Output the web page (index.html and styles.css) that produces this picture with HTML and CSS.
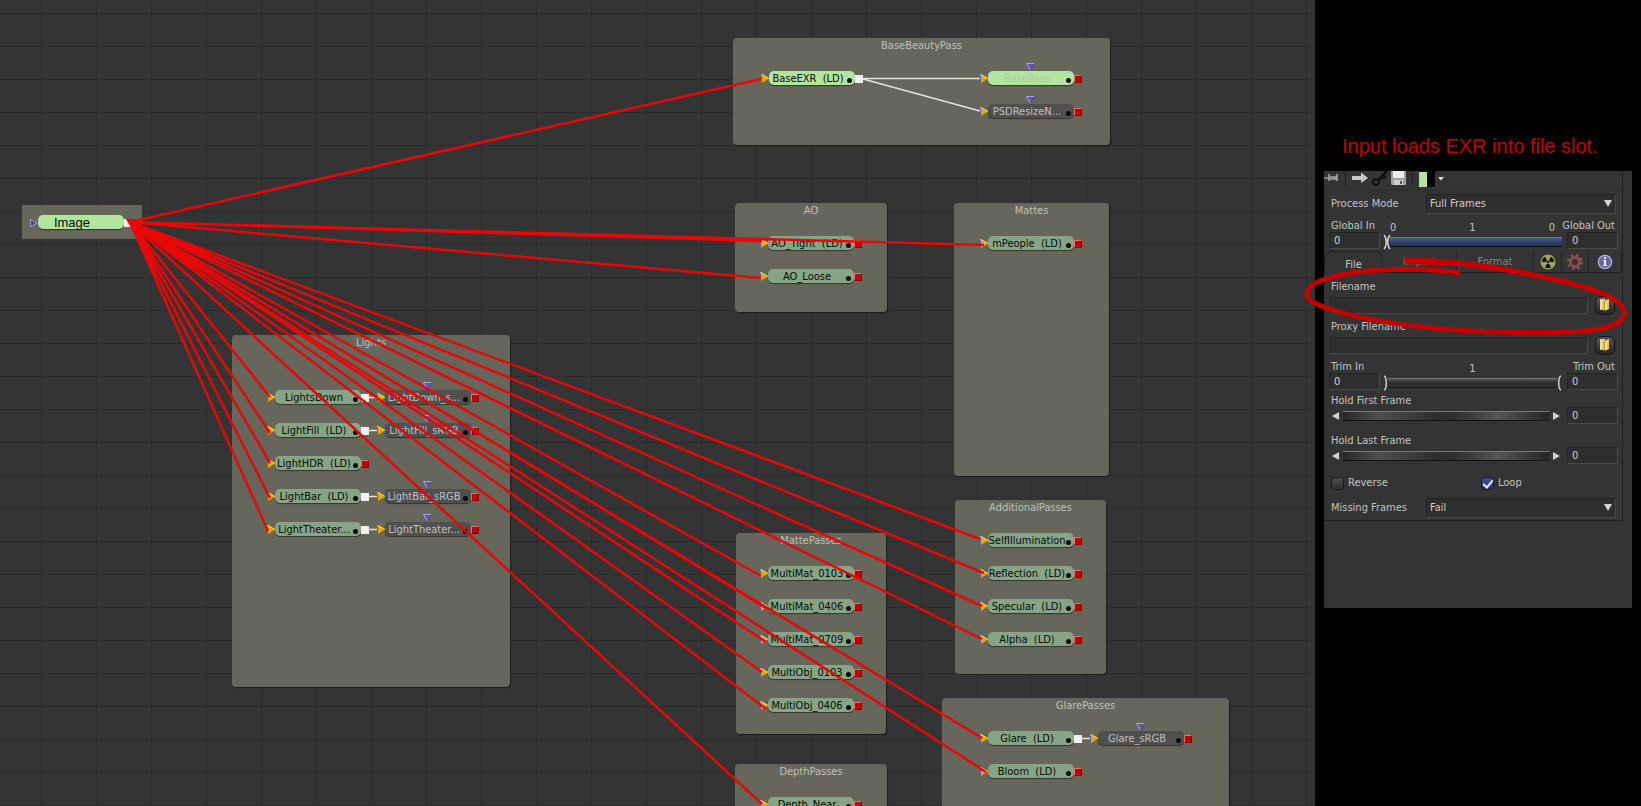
FILE: index.html
```html
<!DOCTYPE html>
<html lang="en">
<head>
<meta charset="utf-8">
<title>Node flow</title>
<link rel="stylesheet" href="styles.css">
</head>
<body>
<svg class="defs" aria-hidden="true">
  <symbol id="in" viewBox="0 0 8 9"><path d="M0 0v9l3-2V2z" fill="#5a5ab4"/><path d="M0 .5l2 1.500" stroke="#c8c8ff"/><path d="M1 0v9L8 4.500z" fill="#e8a800"/><path d="M1 .5L8 4.500" stroke="#ffdc50" fill="none"/></symbol>
  <symbol id="mask" viewBox="0 0 9 8"><path d="M.5.500h8l-4 7z" fill="#5c5cae" stroke="#a5a5e6"/><path d="M8.500.500l-4 7" stroke="#303078"/></symbol>
  <symbol id="folder" viewBox="0 0 12 14"><path d="M1 1h5v11H1z" fill="#e8cc60"/><path d="M5 3l5-2v10l-5 2z" fill="#f4e090"/><path d="M2 2v9" stroke="#fff4b8"/><path d="M5.500 3v10" stroke="#a88a28"/><path d="M9 2v9" stroke="#c9a83e"/></symbol>
</svg>
<main class="app">
  <section class="canvas" aria-label="Flow">
    <div class="group g-image">
      <div class="node lit image"><svg class="src" viewBox="0 0 8 8"><path d="M.5.500v7l6.500-3.500z" fill="#3c3c9a" stroke="#9a9ae0"/></svg><span>Image</span><i class="out open"></i></div>
    </div>

    <div class="group g-base"><h2>BaseBeautyPass</h2>
      <div class="row">
        <div class="node lit"><svg class="in"><use href="#in"/></svg><span>BaseEXR&nbsp; (LD)</span><i class="dot"></i><i class="out open"></i></div>
        <div class="node lit ghost"><svg class="mask"><use href="#mask"/></svg><svg class="in"><use href="#in"/></svg><span>BasePass</span><i class="dot"></i><i class="out"></i></div>
      </div>
      <div class="row end">
        <div class="node tool"><svg class="mask"><use href="#mask"/></svg><svg class="in"><use href="#in"/></svg><span>PSDResizeN...</span><i class="dot"></i><i class="out"></i></div>
      </div>
    </div>

    <div class="group g-ao"><h2>AO</h2>
      <div class="row"><div class="node"><svg class="in"><use href="#in"/></svg><span>AO_Tight&nbsp; (LD)</span><i class="dot"></i><i class="out"></i></div></div>
      <div class="row"><div class="node"><svg class="in"><use href="#in"/></svg><span>AO_Loose</span><i class="dot"></i><i class="out"></i></div></div>
    </div>

    <div class="group g-mattes"><h2>Mattes</h2>
      <div class="row"><div class="node"><svg class="in"><use href="#in"/></svg><span>mPeople&nbsp; (LD)</span><i class="dot"></i><i class="out"></i></div></div>
    </div>

    <div class="group g-lights"><h2>Lights</h2>
      <div class="row">
        <div class="node"><svg class="in"><use href="#in"/></svg><span>LightsDown</span><i class="dot"></i><i class="out open"></i></div>
        <div class="node tool"><svg class="mask"><use href="#mask"/></svg><svg class="in"><use href="#in"/></svg><span>LightDown_s...</span><i class="dot"></i><i class="out"></i></div>
      </div>
      <div class="row">
        <div class="node"><svg class="in"><use href="#in"/></svg><span>LightFill&nbsp; (LD)</span><i class="dot"></i><i class="out open"></i></div>
        <div class="node tool"><svg class="mask"><use href="#mask"/></svg><svg class="in"><use href="#in"/></svg><span>LightFill_sRGB</span><i class="dot"></i><i class="out"></i></div>
      </div>
      <div class="row"><div class="node"><svg class="in"><use href="#in"/></svg><span>LightHDR&nbsp; (LD)</span><i class="dot"></i><i class="out"></i></div></div>
      <div class="row">
        <div class="node"><svg class="in"><use href="#in"/></svg><span>LightBar&nbsp; (LD)</span><i class="dot"></i><i class="out open"></i></div>
        <div class="node tool"><svg class="mask"><use href="#mask"/></svg><svg class="in"><use href="#in"/></svg><span>LightBar_sRGB</span><i class="dot"></i><i class="out"></i></div>
      </div>
      <div class="row">
        <div class="node"><svg class="in"><use href="#in"/></svg><span>LightTheater...</span><i class="dot"></i><i class="out open"></i></div>
        <div class="node tool"><svg class="mask"><use href="#mask"/></svg><svg class="in"><use href="#in"/></svg><span>LightTheater...</span><i class="dot"></i><i class="out"></i></div>
      </div>
    </div>

    <div class="group g-multi"><h2>MattePasses</h2>
      <div class="row"><div class="node"><svg class="in"><use href="#in"/></svg><span>MultiMat_0103</span><i class="dot"></i><i class="out"></i></div></div>
      <div class="row"><div class="node"><svg class="in"><use href="#in"/></svg><span>MultiMat_0406</span><i class="dot"></i><i class="out"></i></div></div>
      <div class="row"><div class="node"><svg class="in"><use href="#in"/></svg><span>MultiMat_0709</span><i class="dot"></i><i class="out"></i></div></div>
      <div class="row"><div class="node"><svg class="in"><use href="#in"/></svg><span>MultiObj_0103</span><i class="dot"></i><i class="out"></i></div></div>
      <div class="row"><div class="node"><svg class="in"><use href="#in"/></svg><span>MultiObj_0406</span><i class="dot"></i><i class="out"></i></div></div>
    </div>

    <div class="group g-extra"><h2>AdditionalPasses</h2>
      <div class="row"><div class="node"><svg class="in"><use href="#in"/></svg><span>SelfIllumination</span><i class="dot"></i><i class="out"></i></div></div>
      <div class="row"><div class="node"><svg class="in"><use href="#in"/></svg><span>Reflection&nbsp; (LD)</span><i class="dot"></i><i class="out"></i></div></div>
      <div class="row"><div class="node"><svg class="in"><use href="#in"/></svg><span>Specular&nbsp; (LD)</span><i class="dot"></i><i class="out"></i></div></div>
      <div class="row"><div class="node"><svg class="in"><use href="#in"/></svg><span>Alpha&nbsp; (LD)</span><i class="dot"></i><i class="out"></i></div></div>
    </div>

    <div class="group g-glare"><h2>GlarePasses</h2>
      <div class="row">
        <div class="node"><svg class="in"><use href="#in"/></svg><span>Glare&nbsp; (LD)</span><i class="dot"></i><i class="out open"></i></div>
        <div class="node tool"><svg class="mask"><use href="#mask"/></svg><svg class="in"><use href="#in"/></svg><span>Glare_sRGB</span><i class="dot"></i><i class="out"></i></div>
      </div>
      <div class="row"><div class="node"><svg class="in"><use href="#in"/></svg><span>Bloom&nbsp; (LD)</span><i class="dot"></i><i class="out"></i></div></div>
    </div>

    <div class="group g-depth"><h2>DepthPasses</h2>
      <div class="row"><div class="node"><svg class="in"><use href="#in"/></svg><span>Depth_Near</span><i class="dot"></i><i class="out"></i></div></div>
    </div>

    <svg class="wires" aria-hidden="true">
      <path class="link" d="M863 78.500H980M863 79L980 111M369 397.500H377M369 430.500H377M369 496.500H377M369 529.500H377M1082 738.500H1090"/>
      <path class="feed" d="M130 222L761 79M130 222L762 241M130 222L761 278M130 222L984 245M130 222L270 397M130 222L270 433M130 222L270 463M130 222L270 498M130 222L268 531M130 222L980 539M130 222L984 573M130 222L982 606M130 222L982 639M130 222L761 576M130 222L766 608M130 222L766 642M130 222L762 672M130 222L766 709M130 222L982 738M130 222L986 772M130 222L762 804"/>
      <path d="M126 219l12 0 2 8-6 6z" fill="#f00000"/>
    </svg>
  </section>

  <aside class="side">
    <p class="caption">Input loads EXR into file slot.</p>
    <form class="panel">
      <div class="settings">
        <div class="toolbar">
          <button type="button" aria-label="Pin"><svg width="16" height="16"><path d="M0 7h5" stroke="#ccc"/><path d="M5 3v7M6 6h6v2H6M13 3v7" stroke="#aaa" fill="none" stroke-width="1.500"/></svg></button>
          <i class="bar"></i>
          <button type="button" aria-label="Next"><svg width="17" height="16"><path d="M0 5h9V1.500l7 5.500-7 5V9H0z" fill="#c8c8c8"/></svg></button>
          <button type="button" aria-label="Keys"><svg width="16" height="16"><circle cx="4" cy="11" r="3" fill="none" stroke="#080808" stroke-width="1.500"/><path d="M6 9L15 0M11 4l3 3M9 6l2 2" stroke="#080808" stroke-width="1.800" fill="none"/></svg></button>
          <button type="button" aria-label="Save"><svg width="16" height="16"><path d="M0 0h15v14H1L0 13z" fill="#a0a0a0"/><path d="M2 0h11v7H2z" fill="#eee"/><path d="M3 9h9v5H3z" fill="#d0d0d0"/><path d="M9 10h2v3H9z" fill="#555"/></svg></button>
          <i class="bar"></i>
          <button type="button" class="swatch" aria-label="Tile color"><i></i></button>
          <svg width="8" height="16"><path d="M0 6h6L3 9.500z" fill="#ddd"/></svg>
        </div>

        <div class="line"><label for="mode">Process Mode</label><span class="pick"><select id="mode"><option>Full Frames</option></select></span></div>

        <div class="span global">
          <div><label for="gin">Global In</label><input id="gin" value="0"></div>
          <div class="track"><div class="ticks"><span>0</span><span>1</span><span>0</span></div>
            <div class="rail blue"><svg width="9" height="16"><path d="M1 1c3 3 3 11 0 14M7 1c-3 3-3 11 0 14" fill="none" stroke="#d0d0d0" stroke-width="1.500"/></svg><input type="range" aria-label="Global range"></div></div>
          <div class="right"><label for="gout">Global Out</label><input id="gout" value="0"></div>
        </div>

        <div class="tabs">
          <button type="button" class="tab on">File</button>
          <button type="button" class="tab">Import</button>
          <button type="button" class="tab">Format</button>
          <button type="button" class="ico" aria-label="Tools"><svg width="16" height="16" viewBox="0 0 16 16"><circle cx="8" cy="8" r="7.500" fill="#a3a15a"/><path transform="rotate(180 8 8)" d="M8 8L5 2.800A6 6 0 0 1 11 2.800zM8 8H14A6 6 0 0 1 11 13.200zM8 8L5 13.200A6 6 0 0 1 2 8z" fill="#111"/><circle cx="8" cy="8" r="2" fill="#a3a15a"/><circle cx="8" cy="8" r="1.200" fill="#111"/></svg></button>
          <button type="button" class="ico" aria-label="Settings"><svg width="16" height="16" viewBox="0 0 16 16"><circle cx="8" cy="8" r="6.500" fill="none" stroke="#8a5050" stroke-width="3" stroke-dasharray="2.600 2.505"/><circle cx="8" cy="8" r="4.500" fill="none" stroke="#8a5050" stroke-width="2.800"/></svg></button>
          <button type="button" class="ico" aria-label="Information"><svg width="16" height="16" viewBox="0 0 16 16"><circle cx="8" cy="8" r="6.700" fill="#6868a4" stroke="#b0b0d0" stroke-width="1.300"/><path d="M7 3h2v2H7zM6 6h3v5h1v1H6v-1h1V7H6z" fill="#eee"/></svg></button>
        </div>

        <div class="file"><label for="fn">Filename</label><div><input id="fn"><button type="button" aria-label="Browse filename"><svg width="12" height="14"><use href="#folder"/></svg></button></div></div>
        <div class="file"><label for="pfn">Proxy Filename</label><div><input id="pfn"><button type="button" aria-label="Browse proxy filename"><svg width="12" height="14"><use href="#folder"/></svg></button></div></div>

        <div class="span">
          <div><label for="tin">Trim In</label><input id="tin" value="0"></div>
          <div class="track"><div class="ticks mid"><span>1</span></div>
            <div class="rail"><svg width="5" height="16"><path d="M1 1c3 1 3 13 0 14" fill="none" stroke="#d0d0d0" stroke-width="1.500"/></svg><input type="range" aria-label="Trim range"><svg width="5" height="16"><path d="M4 1c-3 1-3 13 0 14" fill="none" stroke="#d0d0d0" stroke-width="1.500"/></svg></div></div>
          <div class="right"><label for="tout">Trim Out</label><input id="tout" value="0"></div>
        </div>

        <div class="hold"><label for="hf">Hold First Frame</label><div><svg width="7" height="8"><path d="M7 0v8L0 4z" fill="#d0d0d0"/></svg><input type="range" class="wheel" aria-label="Hold first frame"><svg width="7" height="8"><path d="M0 0v8l7-4z" fill="#d0d0d0"/></svg><input id="hf" value="0"></div></div>
        <div class="hold"><label for="hl">Hold Last Frame</label><div><svg width="7" height="8"><path d="M7 0v8L0 4z" fill="#d0d0d0"/></svg><input type="range" class="wheel" aria-label="Hold last frame"><svg width="7" height="8"><path d="M0 0v8l7-4z" fill="#d0d0d0"/></svg><input id="hl" value="0"></div></div>

        <div class="checks">
          <label><input type="checkbox">Reverse</label>
          <label><input type="checkbox" checked>Loop</label>
        </div>
        <div class="line"><label for="miss">Missing Frames</label><span class="pick"><select id="miss"><option>Fail</option></select></span></div>
      </div>
      <svg class="mark" viewBox="0 0 330 90" aria-hidden="true">
        <path d="M104 7C120 7 140 8 158 10S215 18 251 26S322 45 322 60S290 78 265 79S180 80 131 75S55 65 31 57S5 47 5 39S25 24 48 20S125 14 158 20" fill="none" stroke="#c40000" stroke-width="5" stroke-linejoin="round"/>
        <path d="M102 5L158 8Q210 14 251 25L250 28Q200 18 158 13L103 11z" fill="#c40000"/>
      </svg>
    </form>
  </aside>
</main>
</body>
</html>
```
FILE: styles.css
```css
* { box-sizing: border-box; }
body {
  margin: 0;
  background: #000;
  color: #c4c4c4;
  font: 11px/14px "DejaVu Sans Condensed", "DejaVu Sans", sans-serif;
}
.defs { position: absolute; width: 0; height: 0; }
.app { display: flex; height: 100vh; overflow: hidden; }

/* flow canvas */
.canvas {
  position: relative;
  flex: 1;
  overflow: hidden;
  background-color: #343434;
  background-image:
    linear-gradient(90deg, #2b2b2b 1px, transparent 1px),
    linear-gradient(#2b2b2b 1px, transparent 1px);
  background-size: 55px 33px;
  background-position: 41px 13px;
}
.group {
  position: absolute;
  display: flex;
  flex-direction: column;
  gap: 19px;
  background: #66665b;
  border-radius: 4px;
  box-shadow: 1px 1px 1px #1c1c1c;
}
.group h2 {
  height: 14px;
  margin: 0;
  font: inherit;
  line-height: 16px;
  text-align: center;
  color: #c0c0bc;
}
.row { display: flex; gap: 24px; height: 14px; padding-left: 33px; }
.row.end { justify-content: flex-end; }

.g-image { left: 22px; top: 205px; width: 120px; height: 34px; padding: 10px 16px; border-radius: 0; box-shadow: none; }
.g-base { left: 733px; top: 38px; width: 377px; height: 107px; }
.g-base .row { gap: 133px; padding: 0 36px; }
.g-ao { left: 735px; top: 203px; width: 152px; height: 109px; }
.g-mattes { left: 954px; top: 203px; width: 155px; height: 273px; }
.g-mattes .row { padding-left: 34px; }
.g-lights { left: 232px; top: 335px; width: 278px; height: 352px; }
.g-lights h2 { margin-bottom: 22px; }
.g-multi { left: 736px; top: 533px; width: 150px; height: 201px; }
.g-multi .row { padding-left: 32px; }
.g-extra { left: 955px; top: 500px; width: 151px; height: 174px; }
.g-glare { left: 942px; top: 698px; width: 287px; height: 140px; }
.g-depth { left: 735px; top: 764px; width: 152px; height: 140px; }
.g-lights .row { padding-left: 43px; }
.g-glare .row { padding-left: 46px; }

.node {
  position: relative;
  width: 86px;
  height: 14px;
  padding-right: 8px;
  border-radius: 5px;
  background: #86a586;
  box-shadow: 0 1px 1px #33332c;
  color: #080808;
  text-align: center;
  white-space: nowrap;
}
.node span { display: flex; justify-content: center; line-height: 15px; }
.node.lit { background: #b2e6a0; }
.node.tool { background: #505050; color: #c0c0c0; }
.node.ghost { color: #b4c4ac; }
.node.image { padding-right: 18px; font: 13px/14px "Liberation Sans", sans-serif; }
.in { position: absolute; left: -8px; top: 3px; width: 8px; height: 9px; }
.src { position: absolute; left: -8px; top: 4px; width: 8px; height: 8px; }
.mask { position: absolute; left: 38px; top: -8px; width: 9px; height: 8px; }
.dot { position: absolute; right: 3px; top: 7px; width: 5px; height: 5px; border-radius: 50%; background: #0a0a0a; }
.out { position: absolute; left: 86px; top: 4px; width: 8px; height: 8px; background: #c00000; border: 1px solid #8c0000; border-top-color: #f07070; border-left-color: #f07070; }
.out.open { background: #f0f0f0; border-color: #f0f0f0; }
.wires { position: absolute; inset: 0; width: 100%; height: 100%; }
.link { fill: none; stroke: #e4e4e4; stroke-width: 1.300; }
.feed { fill: none; stroke: #e80808; stroke-width: 2.500; }

/* side panel */
.side { width: 326px; padding: 134px 9px 0; }
.caption {
  margin: 0 0 13px 18px;
  color: #c40000;
  font: 20px/24px "Liberation Sans", sans-serif;
  white-space: nowrap;
}
.panel { position: relative; padding-bottom: 87px; background: #343434; }
.settings { width: 299px; border-right: 1px solid #202020; border-bottom: 1px solid #202020; }
button { padding: 0; border: 0; background: none; color: inherit; font: inherit; }
svg { display: block; flex: none; }
.toolbar { display: flex; height: 20px; border-bottom: 1px solid #2c2c2c; gap: 3px; }
.toolbar button, .toolbar svg { height: 16px; }
.bar { width: 1px; height: 15px; margin: 0 3px 0 2px; background: #1e1e1e; }
.swatch { width: 16px; background: #000; }
.swatch i { display: block; width: 8px; height: 15px; background: #b2e6a0; }

.line { display: grid; grid-template-columns: 95px 1fr; align-items: center; height: 25px; padding: 0 6px 0 7px; }
.pick { position: relative; display: block; height: 20px; }
.pick::after {
  content: "";
  position: absolute;
  right: 4px;
  top: 6px;
  border: 4px solid transparent;
  border-top: 7px solid #d4d4d4;
  border-bottom: 0;
}
select, input { border: 1px solid; border-color: #232323 #4a4a4a #4a4a4a #232323; border-radius: 0; background: #2e2e2e; color: #d0d0d0; font: inherit; }
select { width: 100%; height: 20px; padding: 0 3px; appearance: none; }
input { width: 100%; min-width: 0; height: 17px; padding: 0 4px; }

.span { display: grid; grid-template-columns: 51px 1fr 51px; gap: 5px; height: 34px; padding: 1px 4px 0 5px; }
.span label { display: block; height: 15px; padding-left: 2px; line-height: 18px; white-space: nowrap; }
.span .right label { display: flex; justify-content: flex-end; padding-right: 3px; }
.global { height: 35px; }
.track { margin-left: -2px; }
.ticks { display: flex; justify-content: space-between; height: 17px; padding: 4px 7px 0; }
.ticks.mid { justify-content: center; }
.rail { display: flex; align-items: center; height: 16px; }
input[type="range"] {
  flex: 1;
  height: 10px;
  margin: 0;
  border: 0;
  border-top: 1px solid #777;
  border-bottom: 1px solid #111;
  appearance: none;
  background: linear-gradient(#555, #2c2c2c 50%, #333);
}
input[type="range"]::-webkit-slider-thumb { appearance: none; width: 1px; height: 1px; opacity: 0; }
.rail.blue input { margin-left: -2px; border-top-color: #6478b0; background: linear-gradient(#4a5c92, #303e6c 50%, #27304e); }

.tabs { display: grid; grid-template-columns: 59px 74px 77px 28px 27px 1fr; height: 22px; margin-bottom: 4px; border-bottom: 1px solid #202020; }
.tabs button { border-right: 1px solid #242424; }
.tab { color: #848484; }
.tab.on { height: 22px; padding-top: 4px; border: 1px solid #222; border-bottom: 0; border-radius: 8px 8px 0 0; background: #343434; color: #c8c8c8; }
.ico { display: grid; place-items: center; }

.file, .hold { height: 40px; padding: 0 7px 0 6px; }
.file label, .hold label { display: block; height: 18px; padding-left: 1px; line-height: 20px; }
.file div { display: grid; grid-template-columns: 1fr 20px; gap: 7px; align-items: center; height: 20px; }
.file button { display: grid; place-items: center; height: 19px; border: 1px solid #151515; border-radius: 6px; background: linear-gradient(#555, #262626); }
.hold { padding: 0 4px 0 7px; }
.hold label { height: 16px; padding: 0; }
.hold div { display: grid; grid-template-columns: 7px 1fr 7px 51px; gap: 4px; align-items: center; padding: 0 3px 0 1px; }
.hold div > :last-child { margin-left: 3px; }
input.wheel { background: linear-gradient(90deg, #262626, #505050 18%, #2e2e2e 45%, #303030 55%, #555 75%, #262626); }

.checks { display: grid; grid-template-columns: 150px 1fr; align-items: center; height: 24px; padding-left: 7px; }
.checks label { display: flex; align-items: center; gap: 4px; line-height: 16px; }
input[type="checkbox"] { width: 13px; height: 13px; margin: 0; padding: 0; appearance: none; border: 1px solid #181818; border-radius: 3px; background: linear-gradient(#4c4c4c, #303030); }
input[type="checkbox"]:checked { display: grid; place-items: center; background: linear-gradient(#40508a, #28346a); }
input[type="checkbox"]:checked::before { content: ""; width: 4px; height: 8px; border: solid #e8e8e8; border-width: 0 2px 2px 0; transform: rotate(40deg); }

.mark { position: absolute; left: -22px; top: 82px; width: 330px; height: 90px; overflow: visible; }
```
